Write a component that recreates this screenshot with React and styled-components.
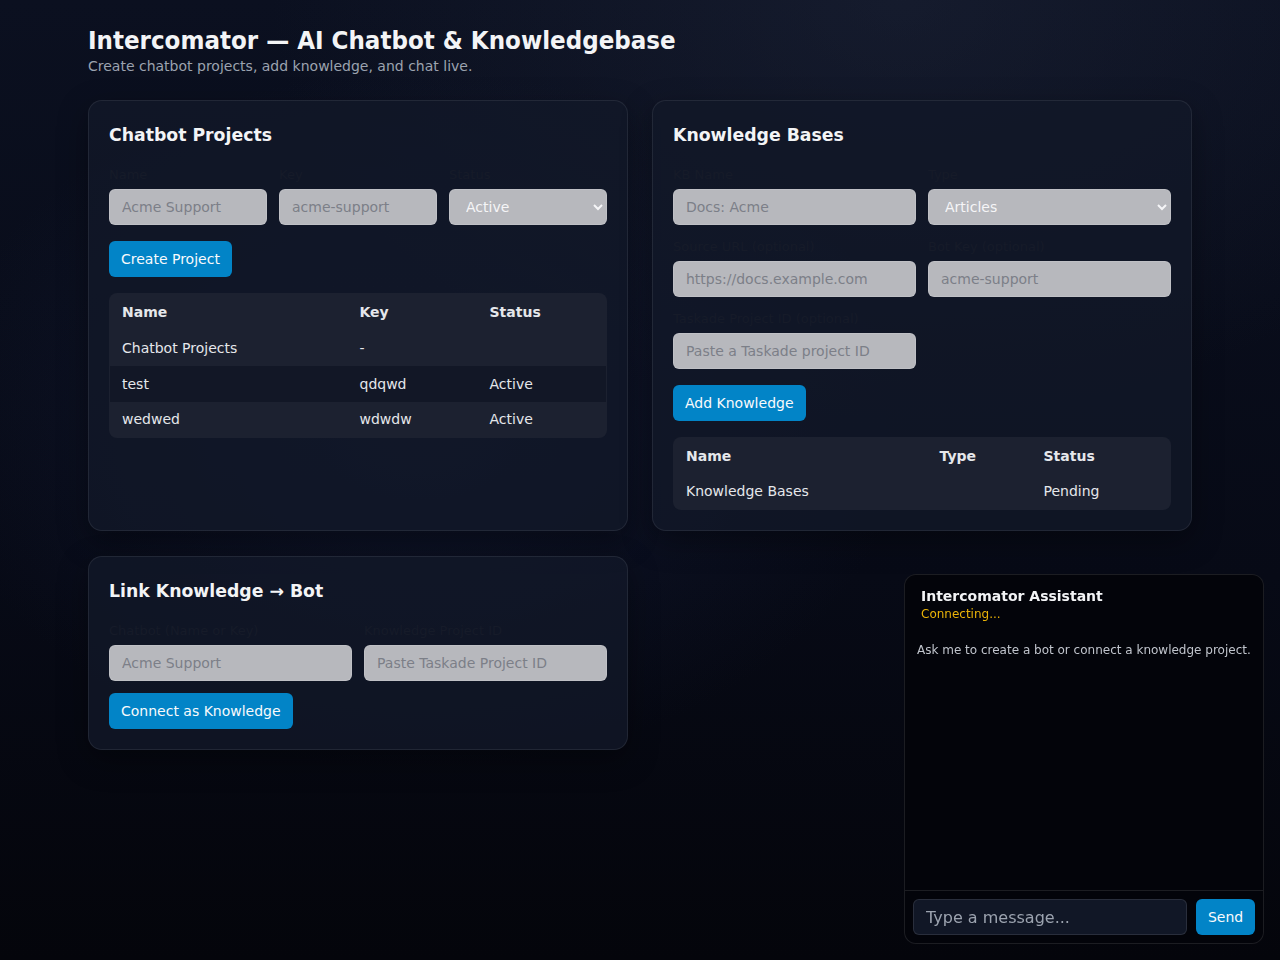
import React from 'react'
import styled, { createGlobalStyle } from 'styled-components'

const GlobalStyle = createGlobalStyle`
  html, body {
    margin: 0;
    min-height: 100%;
  }

  body {
    font-family: 'DejaVu Sans', 'Noto Sans', sans-serif;
    color: #e5e7eb;
    background-color: #060810;
    background-image:
      radial-gradient(ellipse 700px 500px at 420px 420px, rgba(30, 41, 80, 0.35), transparent 70%),
      radial-gradient(ellipse 900px 600px at 900px 0px, rgba(40, 48, 70, 0.35), transparent 70%),
      linear-gradient(180deg, #0b1020 0%, #070a16 60%, #04050b 100%);
    min-height: 960px;
  }

  * {
    box-sizing: border-box;
  }
`

const Page = styled.div`
  max-width: 1104px;
  margin: 0 auto;
  padding: 25px 0 40px;
`

const Header = styled.header`
  margin-bottom: 24px;
`

const Title = styled.h1`
  margin: 0;
  font-family: 'DejaVu Sans Condensed', 'DejaVu Sans', sans-serif;
  font-stretch: condensed;
  font-size: 25.6px;
  line-height: 30px;
  font-weight: 700;
  color: #f3f4f6;
`

const Subtitle = styled.p`
  margin: 1px 0 0;
  font-size: 14px;
  line-height: 20px;
  color: #9ca3af;
`

const Grid = styled.div`
  display: grid;
  grid-template-columns: 1fr 1fr;
  gap: 25px 24px;
  align-items: stretch;
`

const Card = styled.section`
  background: rgba(18, 24, 40, 0.8);
  border: 1px solid rgba(255, 255, 255, 0.08);
  border-radius: 14px;
  padding: 20px;
  box-shadow: 0 10px 30px rgba(0, 0, 0, 0.35);
  align-self: ${p => (p.$top ? 'start' : 'stretch')};
`

const CardTitle = styled.h2`
  margin: 0 0 16px;
  font-size: 17.3px;
  line-height: 28px;
  font-weight: 700;
  color: #f3f4f6;
`

const Fields = styled.div`
  display: grid;
  grid-template-columns: repeat(${p => p.$cols}, 1fr);
  gap: 12px;
`

const Field = styled.label`
  display: flex;
  flex-direction: column;
  gap: 4px;
  min-width: 0;
`

const Label = styled.span`
  font-size: 13px;
  line-height: 20px;
  color: #161b29;
`

const Input = styled.input`
  height: 36px;
  width: 100%;
  padding: 0 12px;
  border: 1px solid rgba(255, 255, 255, 0.12);
  border-radius: 6px;
  background: #b7b8bd;
  font-family: inherit;
  font-size: 14px;
  color: #1f2937;

  &::placeholder {
    color: #7c7f88;
  }
`

const Select = styled.select`
  height: 36px;
  width: 100%;
  padding: 0 12px;
  border: 1px solid rgba(255, 255, 255, 0.12);
  border-radius: 6px;
  background: #b7b8bd;
  font-family: inherit;
  font-size: 14px;
  color: #f5f5f7;
`

const Button = styled.button`
  display: inline-flex;
  align-items: center;
  height: 36px;
  padding: 0 12px;
  margin-top: ${p => p.$mt || 16}px;
  border: none;
  border-radius: 6px;
  background: #0284c7;
  color: #f8fafc;
  font-family: inherit;
  font-size: 14px;
  cursor: pointer;
`

const Table = styled.table`
  width: 100%;
  margin-top: 16px;
  border-collapse: collapse;
  border-radius: 8px;
  overflow: hidden;
  background: #1c2130;
  border: 1px solid rgba(255, 255, 255, 0.04);
  font-size: 14px;

  th, td {
    height: 36px;
    padding: 0 12px;
    text-align: left;
    color: #e5e7eb;
  }

  th {
    font-weight: 700;
  }

  tbody tr:nth-child(even) {
    background: #121726;
  }
`

const Col = styled.col`
  width: ${p => p.$w}px;
`

const Chat = styled.aside`
  position: fixed;
  right: 16px;
  bottom: 16px;
  width: 360px;
  height: 370px;
  display: flex;
  flex-direction: column;
  background: #03040a;
  border: 1px solid rgba(255, 255, 255, 0.1);
  border-radius: 12px;
  overflow: hidden;
`

const ChatHead = styled.div`
  padding: 12px 16px 8px;
`

const ChatTitle = styled.div`
  font-size: 14px;
  line-height: 18px;
  font-weight: 700;
  color: #f3f4f6;
`

const ChatStatus = styled.div`
  font-size: 12px;
  line-height: 18px;
  color: #eab308;
`

const Messages = styled.div`
  flex: 1;
  padding: 10px 12px;
  font-size: 12px;
  line-height: 18px;
  color: #c0c4cc;
`

const Composer = styled.form`
  display: flex;
  gap: 9px;
  padding: 8px;
  border-top: 1px solid rgba(255, 255, 255, 0.1);
`

const ChatInput = styled.input`
  flex: 1;
  height: 36px;
  padding: 0 12px;
  border: 1px solid rgba(255, 255, 255, 0.1);
  border-radius: 6px;
  background: #111726;
  font-family: inherit;
  font-size: 16px;
  color: #e5e7eb;

  &::placeholder {
    color: #9ca3af;
  }
`

const SendButton = styled(Button)`
  margin-top: 0;
  width: 59px;
  justify-content: center;
`

const projects = [
  { name: 'Chatbot Projects', key: '-', status: '' },
  { name: 'test', key: 'qdqwd', status: 'Active' },
  { name: 'wedwed', key: 'wdwdw', status: 'Active' }
]

const App = () => (
  <>
    <GlobalStyle />
    <Page>
      <Header>
        <Title>Intercomator — AI Chatbot &amp; Knowledgebase</Title>
        <Subtitle>Create chatbot projects, add knowledge, and chat live.</Subtitle>
      </Header>

      <Grid>
        <Card>
          <CardTitle>Chatbot Projects</CardTitle>
          <Fields $cols={3}>
            <Field>
              <Label>Name</Label>
              <Input placeholder="Acme Support" />
            </Field>
            <Field>
              <Label>Key</Label>
              <Input placeholder="acme-support" />
            </Field>
            <Field>
              <Label>Status</Label>
              <Select defaultValue="active">
                <option value="active">Active</option>
                <option value="inactive">Inactive</option>
              </Select>
            </Field>
          </Fields>
          <Button>Create Project</Button>
          <Table>
            <colgroup>
              <Col $w={238} />
              <Col $w={130} />
              <col />
            </colgroup>
            <thead>
              <tr>
                <th>Name</th>
                <th>Key</th>
                <th>Status</th>
              </tr>
            </thead>
            <tbody>
              {projects.map(p => (
                <tr key={p.name}>
                  <td>{p.name}</td>
                  <td>{p.key}</td>
                  <td>{p.status}</td>
                </tr>
              ))}
            </tbody>
          </Table>
        </Card>

        <Card>
          <CardTitle>Knowledge Bases</CardTitle>
          <Fields $cols={2}>
            <Field>
              <Label>KB Name</Label>
              <Input placeholder="Docs: Acme" />
            </Field>
            <Field>
              <Label>Type</Label>
              <Select defaultValue="articles">
                <option value="articles">Articles</option>
                <option value="faq">FAQ</option>
              </Select>
            </Field>
            <Field>
              <Label>Source URL (optional)</Label>
              <Input placeholder="https://docs.example.com" />
            </Field>
            <Field>
              <Label>Bot Key (optional)</Label>
              <Input placeholder="acme-support" />
            </Field>
            <Field>
              <Label>Taskade Project ID (optional)</Label>
              <Input placeholder="Paste a Taskade project ID" />
            </Field>
          </Fields>
          <Button>Add Knowledge</Button>
          <Table>
            <colgroup>
              <Col $w={254} />
              <Col $w={104} />
              <col />
            </colgroup>
            <thead>
              <tr>
                <th>Name</th>
                <th>Type</th>
                <th>Status</th>
              </tr>
            </thead>
            <tbody>
              <tr>
                <td>Knowledge Bases</td>
                <td></td>
                <td>Pending</td>
              </tr>
            </tbody>
          </Table>
        </Card>

        <Card $top>
          <CardTitle>Link Knowledge → Bot</CardTitle>
          <Fields $cols={2}>
            <Field>
              <Label>Chatbot (Name or Key)</Label>
              <Input placeholder="Acme Support" />
            </Field>
            <Field>
              <Label>Knowledge Project ID</Label>
              <Input placeholder="Paste Taskade Project ID" />
            </Field>
          </Fields>
          <Button $mt={12}>Connect as Knowledge</Button>
        </Card>
      </Grid>
    </Page>

    <Chat>
      <ChatHead>
        <ChatTitle>Intercomator Assistant</ChatTitle>
        <ChatStatus>Connecting...</ChatStatus>
      </ChatHead>
      <Messages>Ask me to create a bot or connect a knowledge project.</Messages>
      <Composer onSubmit={e => e.preventDefault()}>
        <ChatInput placeholder="Type a message..." />
        <SendButton type="submit">Send</SendButton>
      </Composer>
    </Chat>
  </>
)

export default App
